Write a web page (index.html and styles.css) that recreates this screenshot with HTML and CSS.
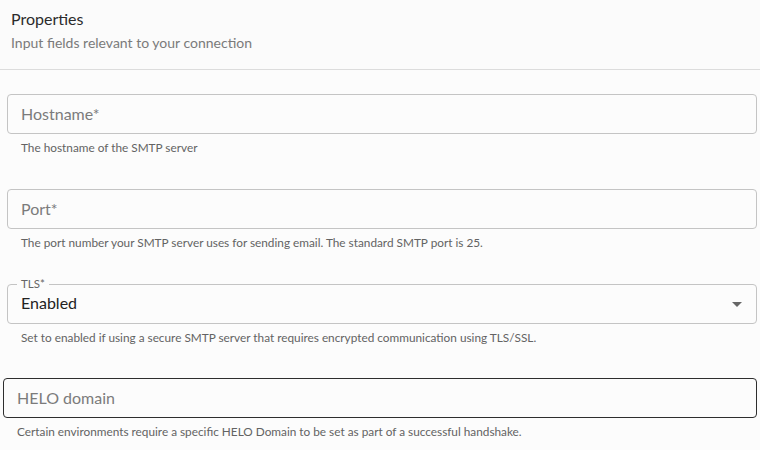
FILE: index.html
```html
<!DOCTYPE html>
<html>
<head>
<meta charset="utf-8">
<link rel="stylesheet" href="styles.css">
</head>
<body>
<div class="page">
  <header class="head">
    <div class="title">Properties</div>
    <div class="subtitle">Input fields relevant to your connection</div>
  </header>
  <div class="form">
    <div class="field">
      <div class="box"><span class="placeholder">Hostname*</span></div>
      <div class="help">The hostname of the SMTP server</div>
    </div>
    <div class="field">
      <div class="box"><span class="placeholder">Port*</span></div>
      <div class="help">The port number your SMTP server uses for sending email. The standard SMTP port is 25.</div>
    </div>
    <div class="field">
      <div class="box select">
        <span class="legend">TLS*</span>
        <span class="value">Enabled</span>
        <svg class="arrow" width="10" height="5" viewBox="0 0 10 5"><path d="M0 0h10L5 5z" fill="#666"/></svg>
      </div>
      <div class="help">Set to enabled if using a secure SMTP server that requires encrypted communication using TLS/SSL.</div>
    </div>
    <div class="field focus">
      <div class="box"><span class="placeholder">HELO domain</span></div>
      <div class="help">Certain environments require a specific HELO Domain to be set as part of a successful handshake.</div>
    </div>
  </div>
</div>
</body>
</html>
```
FILE: styles.css
```css
html, body {
  margin: 0;
  padding: 0;
  background: #fcfcfc;
}
body {
  font-family: Lato, "Noto Sans", sans-serif;
  width: 760px;
  height: 450px;
  overflow: hidden;
}
.head {
  padding: 8px 11px 0;
  height: 61px;
  border-bottom: 1px solid #dcdcdc;
  background: #fbfbfb;
}
.title {
  font-size: 16px;
  line-height: 22px;
  color: #2b2b2b;
}
.subtitle {
  font-size: 14px;
  line-height: 20px;
  margin-top: 3px;
  color: #7a7a7a;
}
.form {
  padding: 24px 3px 0 7px;
  display: flex;
  flex-direction: column;
  gap: 32px;
}
.field {
  display: flex;
  flex-direction: column;
}
.box {
  position: relative;
  height: 40px;
  box-sizing: border-box;
  border: 1px solid #c4c4c4;
  border-radius: 4px;
  padding: 0 13px 2px;
  display: flex;
  align-items: center;
  font-size: 16px;
}
.placeholder {
  color: #7b7b7b;
}
.value {
  color: #222;
  margin-bottom: 2px;
}
.select {
  justify-content: space-between;
}
.arrow {
  margin-right: 1px;
  margin-top: 2px;
}
.legend {
  position: absolute;
  left: 9px;
  top: -8px;
  padding: 0 4px;
  background: #fcfcfc;
  font-size: 11.5px;
  line-height: 14px;
  color: #666;
}
.help {
  margin: 4px 14px 0;
  font-size: 11.8px;
  line-height: 19px;
  color: #636363;
}
.focus {
  margin-left: -4px;
  margin-top: -1px;
}
.focus .box {
  border-color: #2e2e2e;
  border-width: 1.5px;
  padding-left: 13px;
}
.focus .help {
  margin-left: 14px;
}
```
